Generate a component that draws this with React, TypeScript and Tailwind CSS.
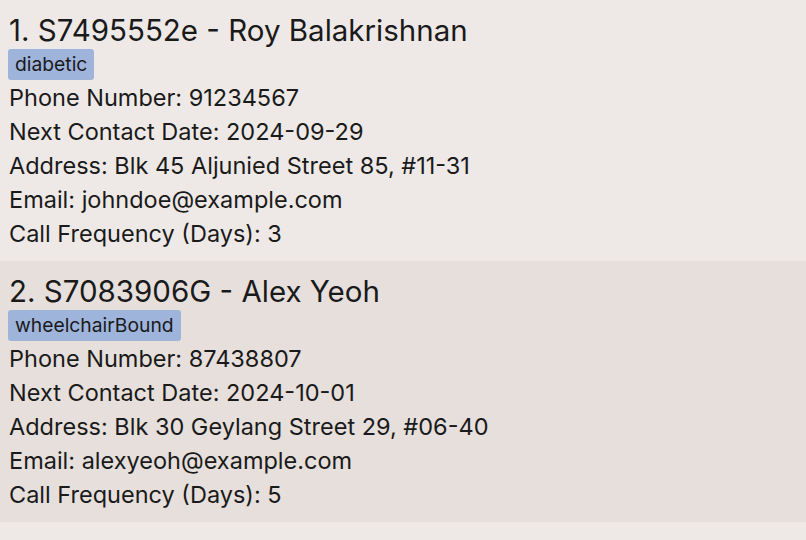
import React from 'react';

type Person = {
  index: number;
  nric: string;
  name: string;
  tags: string[];
  phone: string;
  nextContact: string;
  address: string;
  email: string;
  frequency: number;
};

const people: Person[] = [
  {
    index: 1,
    nric: 'S7495552e',
    name: 'Roy Balakrishnan',
    tags: ['diabetic'],
    phone: '91234567',
    nextContact: '2024-09-29',
    address: 'Blk 45 Aljunied Street 85, #11-31',
    email: 'johndoe@example.com',
    frequency: 3,
  },
  {
    index: 2,
    nric: 'S7083906G',
    name: 'Alex Yeoh',
    tags: ['wheelchairBound'],
    phone: '87438807',
    nextContact: '2024-10-01',
    address: 'Blk 30 Geylang Street 29, #06-40',
    email: 'alexyeoh@example.com',
    frequency: 5,
  },
];

function PersonCard({ person, odd }: { person: Person; odd: boolean }) {
  return (
    <div className={`pl-[9px] pt-[11px] pb-[10px] ${odd ? 'bg-[#e6dfdb]' : 'bg-[#eee9e6]'}`}>
      <div className="text-[29.5px] leading-[38px] text-[#1a1a1a]">
        {person.index}. {person.nric} - {person.name}
      </div>
      <div className="flex gap-1 -ml-[1px]">
        {person.tags.map(tag => (
          <span
            key={tag}
            className="bg-[#9fb4da] rounded-[3px] px-[7px] h-[31px] flex items-center text-[19.3px] text-[#1a1a1a]"
          >
            {tag}
          </span>
        ))}
      </div>
      <div className="text-[23.5px] leading-[34px] text-[#1a1a1a] mt-[1px]">
        <div>Phone Number: {person.phone}</div>
        <div>Next Contact Date: {person.nextContact}</div>
        <div>Address: {person.address}</div>
        <div>Email: {person.email}</div>
        <div>Call Frequency (Days): {person.frequency}</div>
      </div>
    </div>
  );
}

export default function App() {
  return (
    <div className="w-[806px] h-[540px] bg-[#eee9e6] overflow-hidden" style={{ fontFamily: 'Inter, "Open Sans", sans-serif' }}>
      {people.map((p, i) => (
        <PersonCard key={p.nric} person={p} odd={i % 2 === 1} />
      ))}
    </div>
  );
}
